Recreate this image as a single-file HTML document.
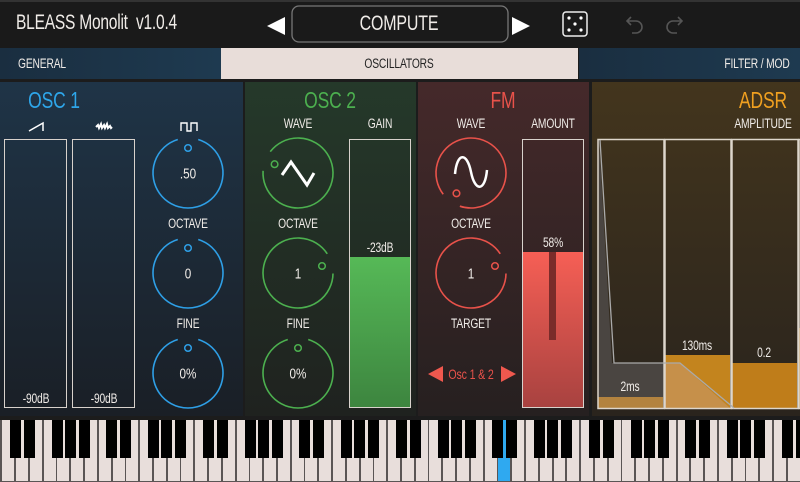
<!DOCTYPE html>
<html><head><meta charset="utf-8"><style>
*{margin:0;padding:0;box-sizing:border-box}
body{width:800px;height:482px;background:#1c1c1c;overflow:hidden;position:relative;font-family:"Liberation Sans Narrow","Liberation Sans",sans-serif;color:#f0ece8}
.a{position:absolute}
.t{position:absolute;transform:translateX(-50%) scaleX(0.76);white-space:nowrap;font-size:13.5px;letter-spacing:-0.2px}
.box{position:absolute;border:1.5px solid #d8d2cc}
</style></head><body>
<div class="a" style="left:0;top:0;width:800px;height:48px;background:#1a1a1a;border-top:2px solid #333"></div>
<div class="a" style="left:16px;top:11px;font-size:21px;letter-spacing:-0.3px;transform:scaleX(0.74);transform-origin:left">BLEASS Monolit&nbsp; v1.0.4</div>
<svg class="a" style="left:0;top:0" width="800" height="48">
<polygon points="267,26 285,17 285,35" fill="#fff"/>
<rect x="292" y="6" width="216" height="36" rx="7" fill="none" stroke="#777" stroke-width="1.3"/>
<polygon points="530,26 512,17 512,35" fill="#fff"/>
<rect x="563" y="12" width="24" height="24" rx="3" fill="none" stroke="#eee" stroke-width="1.5"/>
<circle cx="569" cy="18" r="1.6" fill="#fff"/><circle cx="581" cy="18" r="1.6" fill="#fff"/><circle cx="575" cy="24" r="1.6" fill="#fff"/><circle cx="569" cy="30" r="1.6" fill="#fff"/><circle cx="581" cy="30" r="1.6" fill="#fff"/>
<path d="M631 17 L627 21 L631 25 M627 21 H636 A6 6 0 0 1 636 33 H632" fill="none" stroke="#555" stroke-width="1.6"/>
<path d="M678 17 L682 21 L678 25 M682 21 H673 A6 6 0 0 0 673 33 H677" fill="none" stroke="#555" stroke-width="1.6"/>
</svg>
<div class="t" style="left:399px;top:12px;font-size:21px">COMPUTE</div>
<div class="a" style="left:0;top:48px;width:221px;height:31px;background:linear-gradient(90deg,#1a2e40,#1e3a50)"></div>
<div class="a" style="left:221px;top:48px;width:357px;height:31px;background:#e8ddd9"></div>
<div class="a" style="left:579px;top:48px;width:221px;height:31px;background:linear-gradient(90deg,#1a2e40,#1e3a50)"></div>
<div class="t" style="left:42px;top:56px">GENERAL</div>
<div class="t" style="left:399px;top:56px;color:#222">OSCILLATORS</div>
<div class="t" style="left:757px;top:56px">FILTER / MOD</div>
<div class="a" style="left:0;top:82px;width:243px;height:334px;background:linear-gradient(#1f3447,#1a1f26)"></div>
<div class="a" style="left:245px;top:82px;width:171px;height:334px;background:linear-gradient(#25392a,#1f221f)"></div>
<div class="a" style="left:418px;top:82px;width:171px;height:334px;background:linear-gradient(#45292a,#262020)"></div>
<div class="a" style="left:592px;top:82px;width:208px;height:334px;background:linear-gradient(#43351d,#2a241d)"></div>
<div class="t" style="left:54px;top:87px;font-size:23px;color:#2ea6ea">OSC 1</div>
<div class="t" style="left:330px;top:87px;font-size:23px;color:#4cb04f">OSC 2</div>
<div class="t" style="left:503px;top:87px;font-size:23px;color:#e8524a">FM</div>
<div class="t" style="left:763px;top:87px;font-size:23px;color:#f0a020">ADSR</div>
<div class="t" style="left:298px;top:116px">WAVE</div>
<div class="t" style="left:380px;top:116px">GAIN</div>
<div class="t" style="left:471px;top:116px">WAVE</div>
<div class="t" style="left:553px;top:116px">AMOUNT</div>
<div class="t" style="left:763px;top:116px">AMPLITUDE</div>
<div class="t" style="left:188px;top:216px">OCTAVE</div>
<div class="t" style="left:188px;top:316px">FINE</div>
<div class="t" style="left:298px;top:216px">OCTAVE</div>
<div class="t" style="left:298px;top:316px">FINE</div>
<div class="t" style="left:471px;top:216px">OCTAVE</div>
<div class="t" style="left:471px;top:316px">TARGET</div>
<div class="box" style="left:4px;top:139px;width:63px;height:269px"></div>
<div class="box" style="left:72px;top:139px;width:63px;height:269px"></div>
<div class="t" style="left:36px;top:391px">-90dB</div>
<div class="t" style="left:104px;top:391px">-90dB</div>
<div class="box" style="left:349px;top:139px;width:62px;height:269px;overflow:hidden"><div class="a" style="left:0;top:117px;width:60px;height:150px;background:linear-gradient(#56b957,#3d853f)"></div></div>
<div class="t" style="left:380px;top:240px">-23dB</div>
<div class="box" style="left:522px;top:139px;width:62px;height:269px;overflow:hidden"><div class="a" style="left:0;top:112px;width:60px;height:155px;background:linear-gradient(#f65f55,#a84240)"></div><div class="a" style="left:26px;top:112px;width:7px;height:88px;background:#7a2c2a"></div></div>
<div class="t" style="left:553px;top:235px">58%</div>
<div class="t" style="left:471px;top:366px;font-size:14px;color:#e8524a">Osc 1 &amp; 2</div>
<svg class="a" style="left:592px;top:130px" width="208" height="290">
<rect x="6" y="267" width="65" height="11" fill="#b3833f"/>
<polygon points="7,10 20,233 71,233 71,267 6,267 6,10" fill="#4a4541"/>
<rect x="73" y="225" width="65" height="53" fill="#c3841e"/>
<polygon points="73,233 88,233 138,278 73,278" fill="#c6904a"/>
<rect x="140" y="233" width="65" height="45" fill="#bf7d1a"/>
<rect x="206" y="198" width="4" height="80" fill="#c0801a"/>
<g fill="none" stroke="#ddd6cc" stroke-width="1.5">
<rect x="6" y="9.5" width="66" height="269"/><rect x="73" y="9.5" width="66" height="269"/><rect x="140" y="9.5" width="66" height="269"/><rect x="207" y="9.5" width="4" height="269"/>
</g>
<polyline points="8,10 22,233 88,233 142,278" fill="none" stroke="#aaa" stroke-width="1.3"/>
</svg>
<div class="t" style="left:630px;top:379px">2ms</div>
<div class="t" style="left:697px;top:338px">130ms</div>
<div class="t" style="left:764px;top:345px">0.2</div>
<svg class="a" style="left:0;top:0" width="800" height="420" id="knobs"></svg>
<div id="kb" class="a" style="left:0;top:420px;width:800px;height:62px;background:#5a5555"></div>
<script>
var s=document.getElementById('knobs'),h='';
h+='<path d="M29 131 L43 123 L43 131" fill="none" stroke="#fff" stroke-width="1.5"/>';
h+='<path d="M96 127 l2 -2 l1 3 l2 -4 l1 4 l2 -3 l1 3 l2 -4 l1 4 l2 -2 l1 2 l1 -1" fill="none" stroke="#fff" stroke-width="2"/>';
h+='<path d="M181 131 V123 H187 V131 H191 V123 H197 V131" fill="none" stroke="#fff" stroke-width="1.4"/>';
function knob(cx,cy,col,ang,txt){
 var r=35,g=17*Math.PI/180,a0=ang+g,a1=ang-g+2*Math.PI;
 var x0=cx+r*Math.cos(a0),y0=cy+r*Math.sin(a0),x1=cx+r*Math.cos(a1),y1=cy+r*Math.sin(a1);
 h+='<path d="M'+x0+' '+y0+' A35 35 0 1 1 '+x1+' '+y1+'" fill="none" stroke="'+col+'" stroke-width="1.6"/>';
 h+='<circle cx="'+(cx+25*Math.cos(ang))+'" cy="'+(cy+25*Math.sin(ang))+'" r="3.3" fill="none" stroke="'+col+'" stroke-width="1.5"/>';
 if(txt)h+='<text x="'+cx+'" y="'+(cy+5.5)+'" text-anchor="middle" fill="#f0ece8" font-size="15" transform="translate('+cx+' 0) scale(0.78 1) translate('+(-cx)+' 0)" font-family="Liberation Sans Narrow,Liberation Sans,sans-serif">'+txt+'</text>';
}
var U=-Math.PI/2;
knob(188,173,'#2e9fe6',U,'.50');knob(188,273,'#2e9fe6',U,'0');knob(188,373,'#2e9fe6',U,'0%');
knob(298,173,'#4cb04f',Math.atan2(-9,-24),'');knob(298,273,'#4cb04f',Math.atan2(-7,24),'1');knob(298,373,'#4cb04f',U,'0%');
knob(471,173,'#e8524a',Math.atan2(21,-15),'');knob(471,273,'#e8524a',Math.atan2(-7,24),'1');
h+='<polyline points="282,175 291,162 307,185 314,173" fill="none" stroke="#fff" stroke-width="3"/>';
h+='<path d="M455 174 C457 152 467 152 471 172 C475 192 485 192 487 170" fill="none" stroke="#fff" stroke-width="2.5"/>';
h+='<polygon points="428,374 443,366 443,382" fill="#f0584e"/><polygon points="516,374 501,366 501,382" fill="#f0584e"/>';
s.innerHTML=h;
var k=document.getElementById('kb'),q='',W=13.78;
for(var i=0;i<59;i++){var x=1.5+i*W;q+='<div class="a" style="left:'+(x+0.8)+'px;top:0;width:'+(W-1.8)+'px;height:61px;background:'+(i==36?'#2fa9f0':'#e8dedb')+'"></div>';}
var off=[8.5,22.5,50.5,63.5,77.5];
for(var o=0;o<9;o++)for(var j=0;j<5;j++){var x=1.5+o*7*W+off[j];if(x<800)q+='<div class="a" style="left:'+x+'px;top:0;width:11px;height:38px;background:#000"></div>';}
k.innerHTML=q;
</script>
</body></html>
